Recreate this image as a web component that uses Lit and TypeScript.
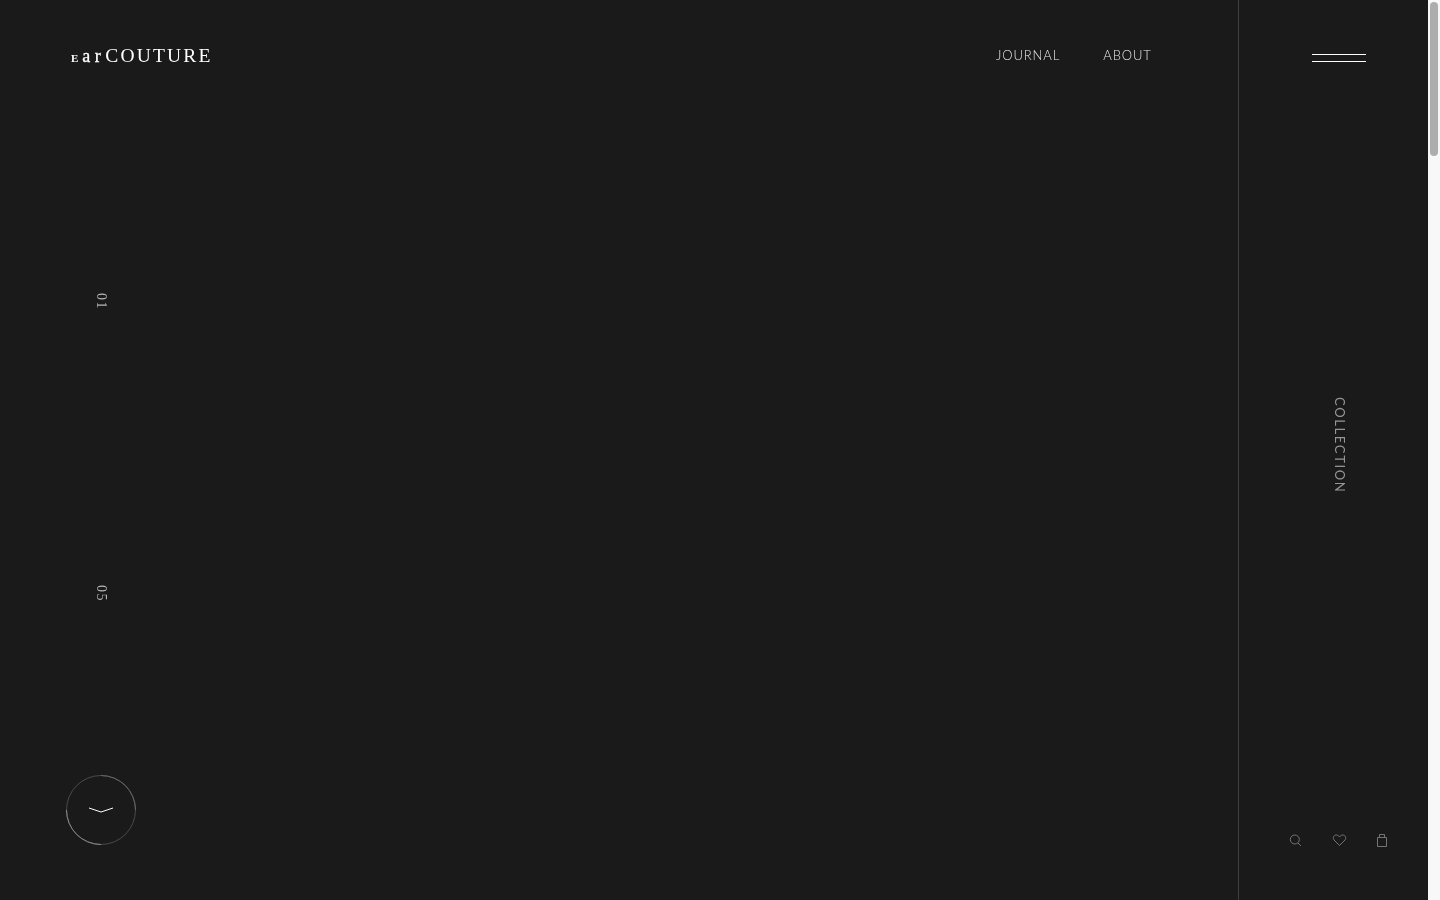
import { LitElement, html, css } from "lit";
import { customElement } from "lit/decorators.js";

@customElement("app-root")
export class AppRoot extends LitElement {
  static styles = css`
    :host { display: block; }
    .page { display: flex; width: 1440px; height: 900px; overflow: hidden; background: #1a1a1a; color: #fff; font-family: "Lato", "Liberation Sans", sans-serif; }
    .main { width: 1238px; display: flex; flex-direction: column; }
    .header { height: 111px; display: flex; align-items: center; justify-content: space-between; padding: 0 86px 0 71px; box-sizing: border-box; }
    .logo { font-family: "Liberation Serif", serif; color: #fff; display: flex; align-items: baseline; white-space: nowrap; will-change: transform; }
    .logo .e { font-size: 11px; font-weight: 700; margin-right: 4px; letter-spacing: 0; }
    .logo .ar { font-size: 18px; letter-spacing: 4.5px; font-weight: 400; -webkit-text-stroke: 0.3px #fff; }
    .logo .c { font-size: 19.5px; letter-spacing: 2.15px; }
    .nav { display: flex; gap: 43px; font-size: 13px; font-weight: 300; letter-spacing: 0.9px; color: #e6e6e6; line-height: 16px; margin-top: -2px; will-change: transform; }
    .rail { width: 70px; margin-left: 66px; flex: 1; display: flex; flex-direction: column; align-items: center; }
    .num { writing-mode: vertical-rl; font-family: "Liberation Serif", serif; font-size: 14px; letter-spacing: 1.5px; color: #b4b4b4; line-height: 14px; will-change: transform; }
    .n1 { margin-top: 182px; }
    .n2 { margin-top: 275px; }
    .circle { margin-top: 173px; width: 70px; height: 70px; }
    .side { width: 190px; border-left: 1px solid #3f3f3f; box-sizing: border-box; padding-left: 11px; display: flex; flex-direction: column; align-items: center; }
    .burger { margin-top: 54px; width: 54px; display: flex; flex-direction: column; gap: 6px; }
    .burger i { display: block; height: 1px; background: #fff; }
    .coll { margin-top: 335px; margin-left: 1px; writing-mode: vertical-rl; font-family: "Lato", sans-serif; font-weight: 400; font-size: 13px; letter-spacing: 1.65px; color: #959595; line-height: 16px; will-change: transform; }
    .icons { margin-top: 341px; display: flex; gap: 29px; }
    .icons svg { display: block; width: 14px; height: 14px; fill: none; stroke: #757575; stroke-width: 1; overflow: visible; }
    .track { width: 12px; background: #f8f8f8; padding: 2px; box-sizing: border-box; }
    .thumb { width: 8px; height: 154px; border-radius: 4px; background: #adadad; }
  `;

  render() {
    return html`
      <div class="page">
        <div class="main">
          <div class="header">
            <div class="logo"><span class="e">E</span><span class="ar">ar</span><span class="c">COUTURE</span></div>
            <div class="nav"><span>JOURNAL</span><span>ABOUT</span></div>
          </div>
          <div class="rail">
            <div class="num n1">01</div>
            <div class="num n2">05</div>
            <svg class="circle" viewBox="0 0 70 70" fill="none">
              <circle cx="35" cy="35" r="34.5" stroke="#4a4a4a" stroke-width="1"></circle>
              <path d="M.5 35a34.500 34.500 0 0 0 34.500 34.500" stroke="#8a8a8a"></path>
              <path d="M35 .5a34.500 34.500 0 0 1 34.500 34.500" stroke="#666"></path>
              <path d="M23 33 L35 37 L47 33" stroke="#ffffff" stroke-width="1"></path>
            </svg>
          </div>
        </div>
        <div class="side">
          <div class="burger"><i></i><i></i></div>
          <div class="coll">COLLECTION</div>
          <div class="icons">
            <svg viewBox="0 0 14 14"><circle cx="5.800" cy="5.500" r="4.500"></circle><path d="M9 9l3 3"></path></svg>
            <svg viewBox="0 0 14 14"><path d="M7.500 11.500 2 6C.5 4 1.500 1 4.300 1 5.800 1 6.900 2 7.500 3 8.100 2 9.200 1 10.700 1 13.500 1 14.500 4 13 6z"></path></svg>
            <svg viewBox="0 0 14 14"><path d="M2.500 3.500h9v9h-9zM4.500 3.500V.5h5v3"></path></svg>
          </div>
        </div>
        <div class="track"><div class="thumb"></div></div>
      </div>
    `;
  }
}
